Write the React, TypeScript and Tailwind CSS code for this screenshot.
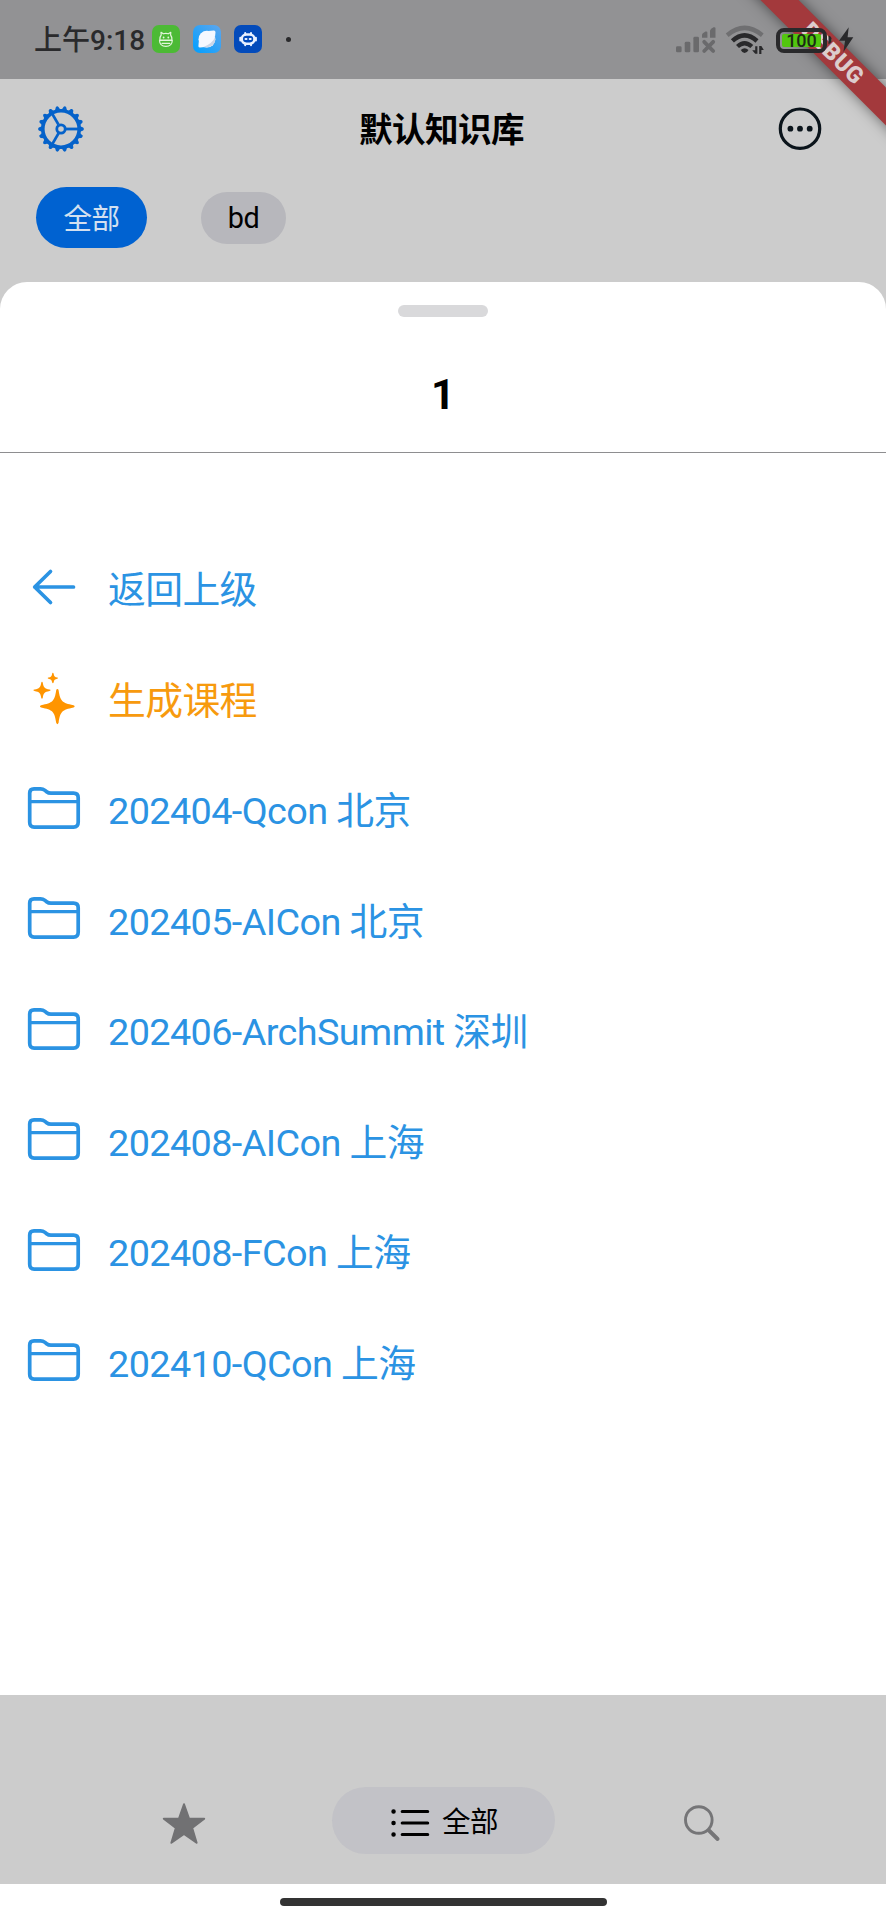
import React from "react";

const BLUE = "#2b93e3";

const folders = [
  "202404-Qcon 北京",
  "202405-AICon 北京",
  "202406-ArchSummit 深圳",
  "202408-AICon 上海",
  "202408-FCon 上海",
  "202410-QCon 上海",
];

function GearIcon() {
  const teeth = Array.from({ length: 18 }, (_, i) => i * 20);
  return (
    <svg className="h-12 w-12" viewBox="-24 -24 48 48" fill="none" stroke="#0562ca">
      <circle r="18.2" strokeWidth="3.6" />
      {teeth.map((a) => (
        <path key={a} d="M18.5 -3L22.2 -1.4Q23.8 0 22.2 1.4L18.5 3Z" fill="#0562ca" stroke="none" transform={`rotate(${a})`} />
      ))}
      <circle r="4.2" strokeWidth="2.8" />
      {[0, 120, 240].map((a) => (
        <path key={a} d="M5 0H18" strokeWidth="2.8" transform={`rotate(${a})`} />
      ))}
    </svg>
  );
}

function FolderIcon() {
  return (
    <svg className="h-[44px] w-[54px]" viewBox="0 0 54 44" fill="none" stroke={BLUE} strokeWidth="3.7" strokeLinejoin="round">
      <path d="M2.7 7Q2.7 2.8 7 2.8H13.5Q16 2.8 18 4.4L19.6 5.7Q21.4 7.2 24 7.2H46.5Q51.2 7.2 51.2 11.8V36.3Q51.2 41.1 46.5 41.1H7.2Q2.7 41.1 2.7 36.3Z" />
      <path d="M2.5 15.6H51.3" strokeWidth="3.1" />
    </svg>
  );
}

function StatusBar() {
  return (
    <header className="flex h-[79px] shrink-0 items-center bg-[#929294] pb-px pl-[34px]">
      <div className="mt-[3px] w-[118px] whitespace-nowrap text-[28px] font-medium leading-none text-[#2a2a2c]">上午9:18</div>
      <svg className="h-7 w-7" viewBox="0 0 28 28" fill="none">
        <rect width="28" height="28" rx="7" fill="#4cba35" />
        <g stroke="#e3f5dc" strokeWidth="1.2" strokeLinejoin="round" strokeLinecap="round">
          <path d="M7.8 15.2C7.8 12.5 8.3 11 9.2 10L9 7.3L11.3 8.8Q13.8 8 16.4 8.8L18.8 7.3L18.6 10C19.5 11 20 12.5 20 15.2Z" />
          <path d="M7.5 15.5H20.3Q20 21.4 13.9 21.4T7.5 15.5ZM10 18.3H17.8" />
          <path d="M11.6 12.3V12.5M16.3 12.3V12.5" strokeWidth="1.8" />
        </g>
      </svg>
      <svg className="ml-[13px] h-7 w-7" viewBox="0 0 28 28">
        <defs>
          <linearGradient id="sky" x1="1" y1="0" x2="0" y2="1">
            <stop stopColor="#5fa6ed" />
            <stop offset="1" stopColor="#009fff" />
          </linearGradient>
        </defs>
        <rect width="28" height="28" rx="7" fill="url(#sky)" />
        <circle cx="13.9" cy="14.2" r="8.4" fill="#f5f8ff" />
        <path d="M5.8 16.5L5.4 21.2Q5.6 22.6 7.2 22.4L12 22Z" fill="#f5f8ff" />
        <path d="M15.5 6L20.6 5.6Q22.6 5.4 22.5 7.6L22 12Z" fill="#f5f8ff" />
        <path d="M22.2 12Q19.5 18.5 10.5 21.9Q15 23.3 19.2 20.6Q23 17.5 22.2 12Z" fill="#cbd6e8" />
      </svg>
      <svg className="ml-[13px] h-7 w-7" viewBox="0 0 28 28" fill="none" stroke="#e9f1ff">
        <rect width="28" height="28" rx="7" fill="#034bbb" stroke="none" />
        <rect x="7.7" y="9.5" width="12.8" height="9.2" rx="4.6" strokeWidth="2.6" />
        <path d="M6.3 12.8V15.5M21.9 12.8V15.5M11.2 8V9.5M17 8V9.5M11.2 19V20.2M17 19V20.2" strokeWidth="2" strokeLinecap="round" />
        <path d="M11.5 14.1H12.5M15.7 14.1H16.7" strokeWidth="2" strokeLinecap="round" />
      </svg>
      <div className="ml-6 h-[5px] w-[5px] rounded-full bg-[#29292b]" />
      <svg className="ml-auto h-[79px] w-[212px]" viewBox="674 0 212 79" fill="none">
        <g fill="#6a6a6c">
          <rect x="676" y="46.3" width="5.6" height="6" rx="1.4" />
          <rect x="684.7" y="41.8" width="5.6" height="10.5" rx="1.4" />
          <rect x="693.4" y="36.8" width="5.6" height="15.5" rx="1.4" />
          <path d="M702 34.5Q702 33.4 705.5 31.5Q707.4 31 707.4 32.8V37.8H702Z" />
          <path d="M710 30.5Q710 29.5 713.5 27.3Q715.5 26.8 715.5 28.5V37.8H710Z" />
        </g>
        <path d="M704.2 41.8L713.2 51M713.2 41.8L704.2 51" stroke="#6a6a6c" strokeWidth="3.8" strokeLinecap="round" />
        <path d="M727.2 35.2Q744.5 20.6 762.3 35.2" stroke="#6f6f71" strokeWidth="4.4" />
        <path d="M732.4 40.9Q744.5 30 757 40.9" stroke="#29292b" strokeWidth="4.6" />
        <path d="M737.5 46.5Q744.5 39.8 751.8 46.5" stroke="#29292b" strokeWidth="4.3" />
        <path d="M740.8 50Q744.6 46.6 748.5 50Q747 53 744.6 53Q742.3 53 740.8 50Z" fill="#29292b" />
        <path d="M755.2 46.2H757.4V53.8H755.2L752.2 50.2H755.2ZM761.4 54H759.2V46H761.4L763.8 50H761.4Z" fill="#29292b" />
      </svg>
    </header>
  );
}

function Battery() {
  return (
    <div className="absolute left-[776px] top-[27px] flex items-center">
      <div className="h-[25px] w-[51px] rounded-[8px] border-[4px] border-[#29292b] p-[2px]">
        <div className="flex h-full w-[39px] items-center justify-center rounded-[2px] bg-[#52c60e] pt-px text-[18px] font-medium leading-none text-[#1c2a16]">
          100
        </div>
      </div>
      <svg className="ml-px h-[26px] w-[26px]" viewBox="0 0 26 26" fill="#29292b">
        <path d="M0.5 8.5Q3.7 9.2 3.7 12.8T0.5 17Z" />
        <path d="M20.7 0.3L11 13.7H17L15.4 25L25.3 10.2H19.6Z" />
      </svg>
    </div>
  );
}

function DebugBanner() {
  return (
    <div className="absolute right-0 top-0 h-[180px] w-[180px] overflow-hidden">
      <div className="absolute left-[-23px] top-[40px] flex h-[27px] w-[300px] rotate-45 items-center justify-center bg-[#a3393c] text-[23px] font-black leading-none tracking-[0.6px] text-[#dccccd] shadow-[0_0_14px_rgba(0,0,0,0.5)]">
        DEBUG
      </div>
    </div>
  );
}

function Row({ icon, color, children }: { icon: React.ReactNode; color: string; children: React.ReactNode }) {
  return (
    <li className="flex h-[110.5px] items-center pl-[27px]">
      <div className="flex w-[54px] justify-center">{icon}</div>
      <span className={`ml-[27px] mt-[9px] whitespace-nowrap text-[37.8px] leading-none tracking-[-0.6px] ${color}`}>{children}</span>
    </li>
  );
}

export default function App() {
  return (
    <div className="relative flex h-[1920px] w-[886px] flex-col overflow-hidden bg-[#cccccc] font-['Roboto','Noto_Sans_CJK_SC',sans-serif] text-black">
      <StatusBar />

      <div className="flex h-[99px] shrink-0 items-center justify-between pl-[37px] pr-[64px]">
        <GearIcon />
        <h1 className="ml-[20px] mt-[4px] text-[33.6px] font-bold leading-none tracking-[-0.6px]">默认知识库</h1>
        <svg className="h-[44px] w-[44px]" viewBox="0 0 44 44">
          <circle cx="22" cy="21.7" r="19.7" fill="none" stroke="#0b141b" strokeWidth="3.2" />
          <g fill="#0b141b">
            <circle cx="12.4" cy="21.7" r="2.9" />
            <circle cx="22" cy="21.7" r="2.9" />
            <circle cx="31.7" cy="21.7" r="2.9" />
          </g>
        </svg>
      </div>

      <div className="flex h-[104px] shrink-0 items-start gap-[54px] pl-9 pt-[9px]">
        <button className="flex h-[61px] w-[111px] items-center justify-center rounded-full bg-[#0062d1] pt-[6px] text-[28.5px] leading-none tracking-[-0.4px] text-[#d3e0f0]">全部</button>
        <button className="mt-[5px] flex h-[52px] w-[85px] items-center justify-center rounded-full bg-[#b7b7bc] text-[28.8px] leading-none tracking-[-0.4px]">bd</button>
      </div>

      <main className="flex h-[1413px] shrink-0 flex-col rounded-t-[27px] bg-white">
        <div className="flex h-[171px] shrink-0 flex-col items-center border-b border-[#8e8e90] pt-[23px]">
          <div className="h-[11.5px] w-[90px] rounded-full bg-[#d9d9db]" />
          <h2 className="mt-[57px] text-[42px] font-bold leading-none">1</h2>
        </div>
        <ul className="mt-[78.5px] flex flex-col">
          <Row
            color="text-[#2b93e3]"
            icon={
              <svg className="h-[38px] w-[44px]" viewBox="0 0 44 38" fill="none" stroke={BLUE} strokeWidth="3.7" strokeLinecap="round" strokeLinejoin="round">
                <path d="M18.5 3.5L2.7 19L18.5 34.5M2.7 19H41.5" />
              </svg>
            }
          >
            返回上级
          </Row>
          <Row
            color="text-[#f79a0e]"
            icon={
              <svg className="mt-[3px] h-[54px] w-[44px]" viewBox="0 0 44 54" fill="#ff9500">
                <path d="M25.4 17Q26.3 17 26.6 18.3C28.2 29 30 31 41.5 33.2Q43.8 34.3 41.5 35.4C30 37.8 28.2 39.5 26.6 50.7Q25.4 53.6 24.2 50.7C22.6 39.5 20.8 37.8 9.1 35.4Q6.8 34.3 9.1 33.2C20.8 31 22.6 29 24.2 18.3Q24.5 17 25.4 17Z" />
                <path d="M10 9.7Q10.6 9.7 10.8 11C11.6 15.5 12.5 16.6 17.5 17.6Q19.8 18.3 17.5 19C12.5 20 11.6 21 10.8 25.7Q10 27.6 9.2 25.7C8.4 21 7.5 20 2.5 19Q0.2 18.3 2.5 17.6C7.5 16.6 8.4 15.5 9.2 11Q9.4 9.7 10 9.7Z" />
                <path d="M20.8 0.7Q21.5 0.7 21.7 2C22 4.5 22.9 5.2 25.3 5.6Q27 6.1 25.3 6.7C22.9 7.1 22 8 21.7 10.3Q20.9 12 20.1 10.3C19.7 8 18.9 7.1 16.4 6.7Q14.7 6.1 16.4 5.6C18.9 5.2 19.7 4.5 20.1 2Q20.2 0.7 20.8 0.7Z" />
              </svg>
            }
          >
            生成课程
          </Row>
          {folders.map((name) => (
            <Row key={name} color="text-[#2b93e3]" icon={<FolderIcon />}>
              {name}
            </Row>
          ))}
        </ul>
      </main>

      <nav className="flex h-[189px] shrink-0 items-start pt-[92px]">
        <svg className="ml-[162px] mt-[16px] h-[42px] w-[44px]" viewBox="0 0 44 42" fill="#717173" stroke="#717173" strokeWidth="2" strokeLinejoin="round">
          <path d="M22 1.3L27 15.5L42.2 15.7L30.1 24.9L34.6 39.8L22 30.9L9.4 39.8L13.9 24.9L1.8 15.7L17 15.5Z" />
        </svg>
        <button className="ml-[126px] flex h-[67px] w-[223px] items-center rounded-full bg-[#c2c2c7] pl-[59px]">
          <svg className="mt-[4px] h-[28px] w-[39px]" viewBox="0 0 39 28" fill="none" stroke="#000" strokeWidth="3.1" strokeLinecap="round">
            <path d="M11.2 2.5H36.7M11.2 14H36.7M11.2 25.5H36.7" />
            <path d="M2.5 2.5H2.6M2.5 14H2.6M2.5 25.5H2.6" strokeWidth="4.4" />
          </svg>
          <span className="ml-[12px] mt-[6px] text-[28.5px] leading-none tracking-[-0.4px]">全部</span>
        </button>
        <svg className="ml-[128px] mt-[17px] h-[39px] w-[38px]" viewBox="0 0 38 39" fill="none" stroke="#757577" strokeLinecap="round">
          <circle cx="15.8" cy="16" r="13.3" strokeWidth="2.9" />
          <path d="M26 26.5L34.6 35" strokeWidth="3.9" />
        </svg>
      </nav>

      <footer className="flex h-[36px] shrink-0 justify-center bg-white pt-[14px]">
        <div className="h-2 w-[327px] rounded-full bg-[#333333]" />
      </footer>

      <DebugBanner />
      <Battery />
    </div>
  );
}
